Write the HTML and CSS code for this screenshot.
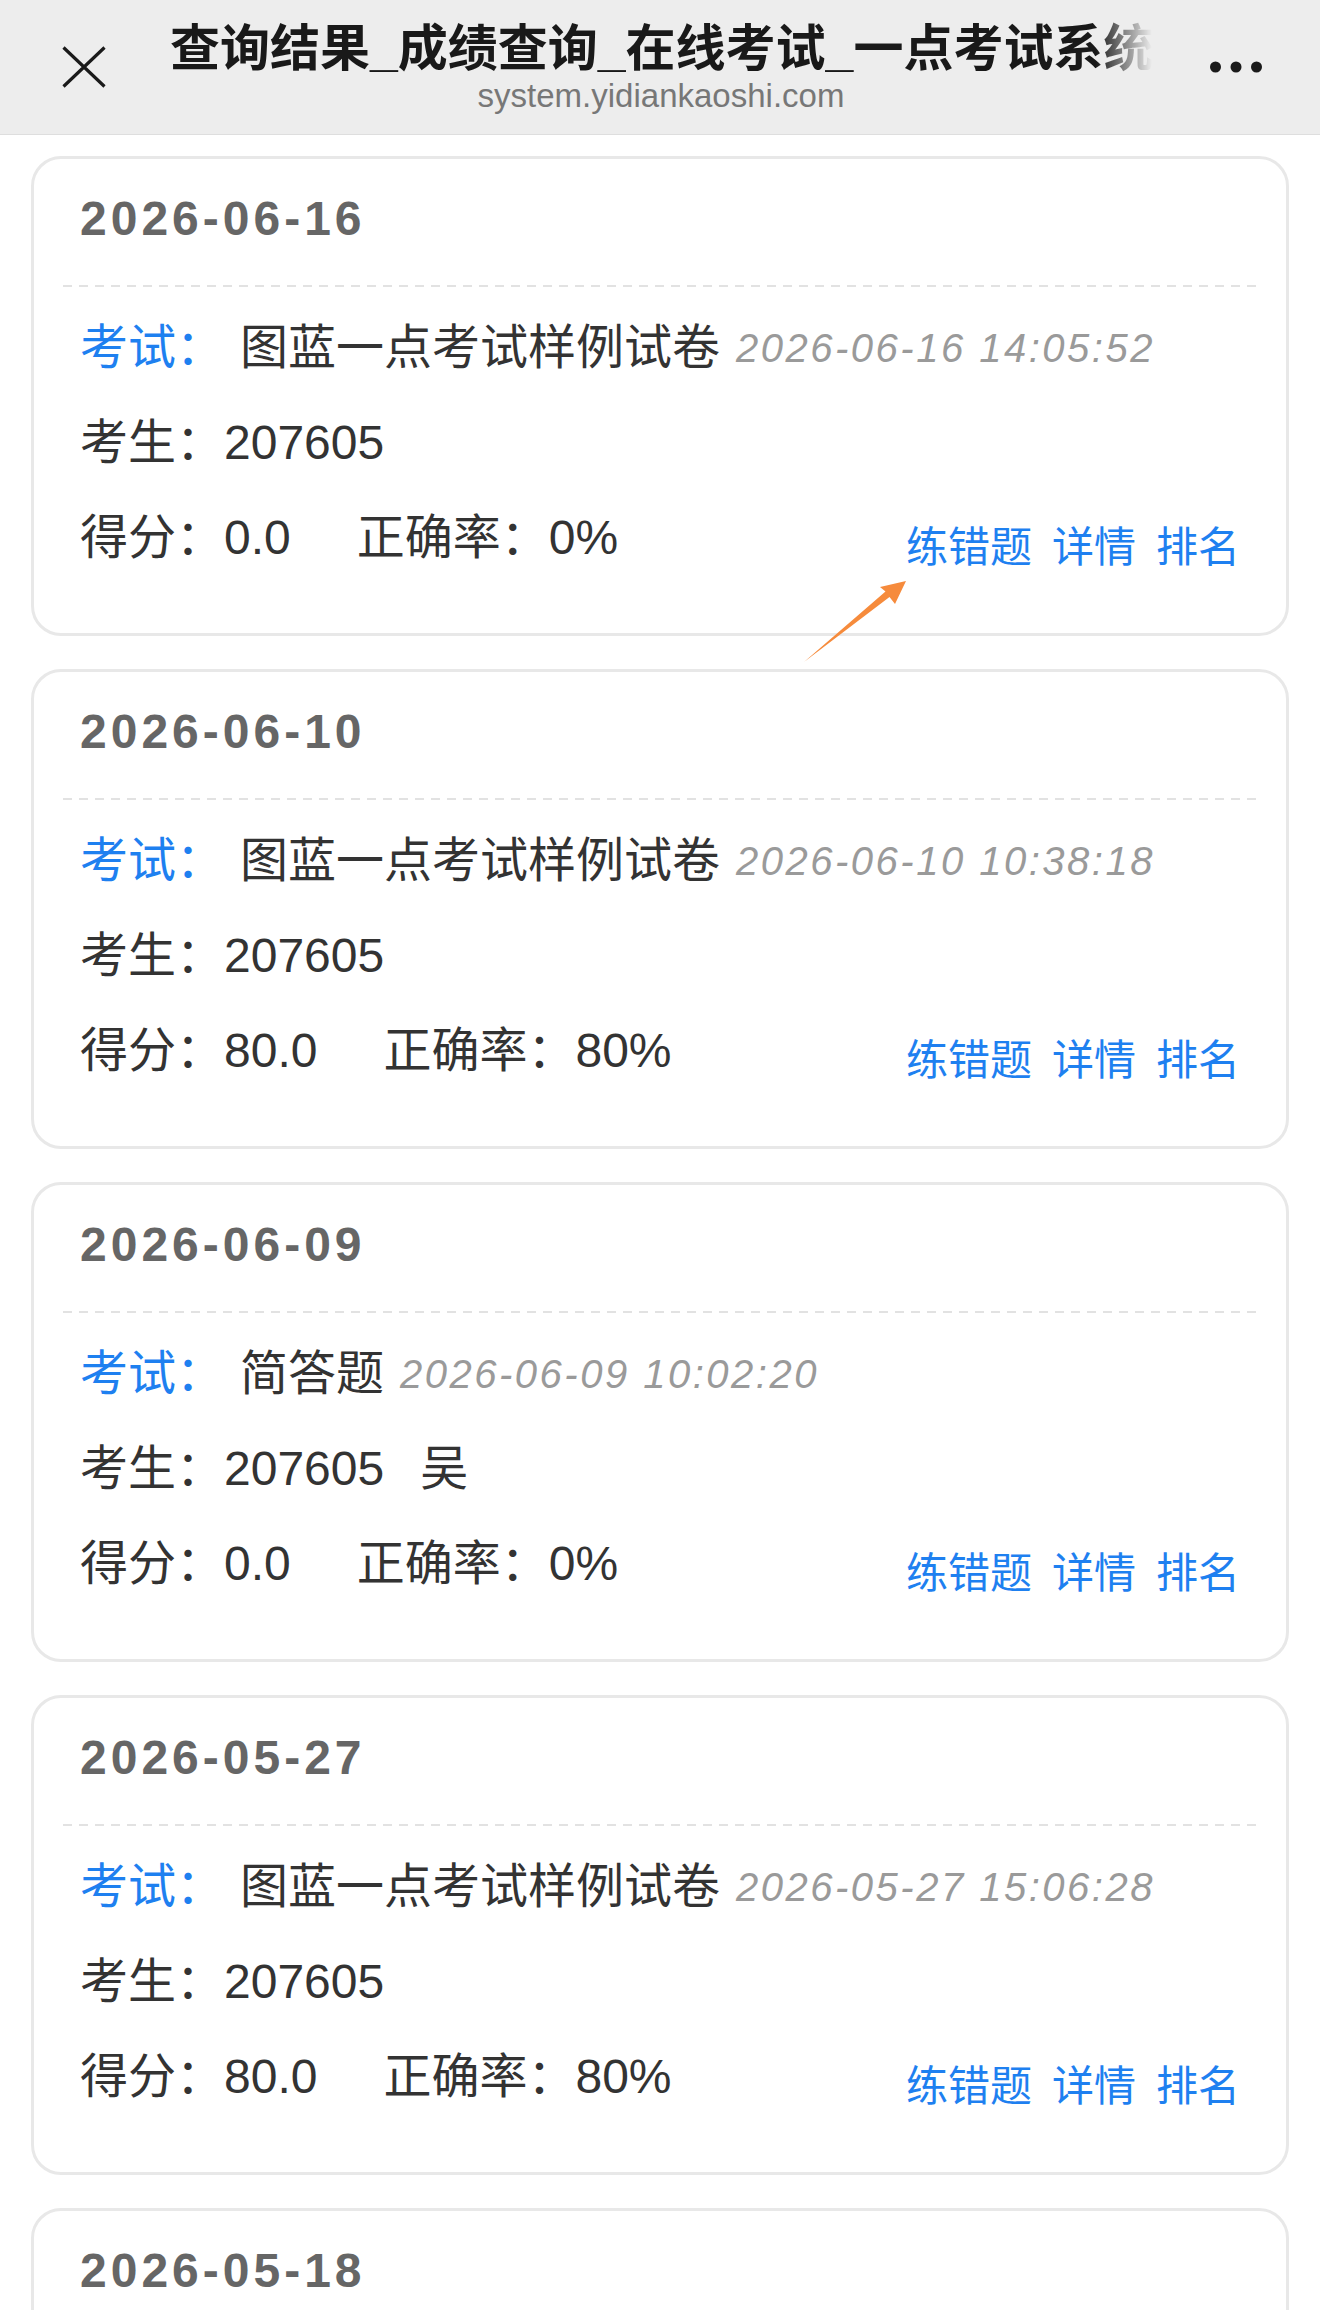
FILE: index.html
```html
<!DOCTYPE html>
<html lang="zh-CN">
<head>
  <meta charset="UTF-8">
  <meta name="viewport" content="width=device-width, initial-scale=1.0">
  <title>查询结果_成绩查询_在线考试_一点考试系统</title>
  <link rel="stylesheet" href="styles.css">
</head>
<body>
  <!-- 顶部标题栏 -->
  <header class="topbar">
    <button class="bar-btn close-btn" aria-label="关闭">
      <svg width="44" height="42" viewBox="0 0 44 42">
        <path d="M1.5 1.5 L42.5 40.5 M42.5 1.5 L1.5 40.5" stroke="#1a1a1a" stroke-width="3.2" fill="none"/>
      </svg>
    </button>
    <div class="bar-title">
      <div class="page-title">查询结果_成绩查询_在线考试_一点考试系统</div>
      <div class="page-host">system.yidiankaoshi.com</div>
    </div>
    <button class="bar-btn more-btn" aria-label="更多">
      <svg width="54" height="12" viewBox="0 0 54 12">
        <circle cx="5.5" cy="6" r="5.5" fill="#1a1a1a"/>
        <circle cx="26" cy="6" r="5.5" fill="#1a1a1a"/>
        <circle cx="46.5" cy="6" r="5.5" fill="#1a1a1a"/>
      </svg>
    </button>
  </header>

  <!-- 成绩列表 -->
  <div class="result-list">
    <div class="result-card">
      <div class="card-date">2026-06-16</div>
      <div class="card-body">
        <div class="row"><span class="label">考试：</span><span class="exam-name">图蓝一点考试样例试卷</span><span class="exam-time">2026-06-16 14:05:52</span></div>
        <div class="row">考生：207605</div>
        <div class="row row-score">
          <div class="score"><span class="score-val">得分：0.0</span><span>正确率：0%</span></div>
          <div class="ops"><a href="#">练错题</a><a href="#">详情</a><a href="#">排名</a></div>
        </div>
      </div>
      <!-- 指向“练错题”的提示箭头 -->
      <svg class="tip-arrow" viewBox="0 0 110 90">
        <polygon points="106,6 80,12 85.5,16.5 4,87 89.5,22 95,29" fill="#f68b3c"/>
      </svg>
    </div>

    <div class="result-card">
      <div class="card-date">2026-06-10</div>
      <div class="card-body">
        <div class="row"><span class="label">考试：</span><span class="exam-name">图蓝一点考试样例试卷</span><span class="exam-time">2026-06-10 10:38:18</span></div>
        <div class="row">考生：207605</div>
        <div class="row row-score">
          <div class="score"><span class="score-val">得分：80.0</span><span>正确率：80%</span></div>
          <div class="ops"><a href="#">练错题</a><a href="#">详情</a><a href="#">排名</a></div>
        </div>
      </div>
    </div>

    <div class="result-card">
      <div class="card-date">2026-06-09</div>
      <div class="card-body">
        <div class="row"><span class="label">考试：</span><span class="exam-name">简答题</span><span class="exam-time">2026-06-09 10:02:20</span></div>
        <div class="row">考生：207605<span class="student-name">吴</span></div>
        <div class="row row-score">
          <div class="score"><span class="score-val">得分：0.0</span><span>正确率：0%</span></div>
          <div class="ops"><a href="#">练错题</a><a href="#">详情</a><a href="#">排名</a></div>
        </div>
      </div>
    </div>

    <div class="result-card">
      <div class="card-date">2026-05-27</div>
      <div class="card-body">
        <div class="row"><span class="label">考试：</span><span class="exam-name">图蓝一点考试样例试卷</span><span class="exam-time">2026-05-27 15:06:28</span></div>
        <div class="row">考生：207605</div>
        <div class="row row-score">
          <div class="score"><span class="score-val">得分：80.0</span><span>正确率：80%</span></div>
          <div class="ops"><a href="#">练错题</a><a href="#">详情</a><a href="#">排名</a></div>
        </div>
      </div>
    </div>

    <div class="result-card">
      <div class="card-date">2026-05-18</div>
    </div>
  </div>
</body>
</html>
```

FILE: styles.css
```css
:root {
  --blue: #1e80f0;
  --text: #333;
  --muted: #9a9a9a;
  --line: #e8e8e8;
}

* {
  box-sizing: border-box;
  margin: 0;
  padding: 0;
}

html,
body {
  overflow: hidden;
}

body {
  background: #fff;
  color: var(--text);
  font-family: "Liberation Sans", "Noto Sans CJK SC", sans-serif;
}

/* 顶部标题栏 */
.topbar {
  display: grid;
  grid-template-columns: 124px 1fr 124px;
  height: 135px;
  background: #ededed;
  border-bottom: 1px solid #dedede;
}

.bar-btn {
  display: flex;
  align-items: center;
  border: none;
  background: none;
}

.close-btn {
  padding-left: 62px;
}

.more-btn {
  padding-left: 14px;
}

.bar-title {
  min-width: 0;
  padding: 20px 44px 0 46px;
}

.page-title {
  font-size: 50px;
  line-height: 58px;
  font-weight: 600;
  color: #191919;
  white-space: nowrap;
  overflow: hidden;
  -webkit-mask-image: linear-gradient(to right, #000 calc(100% - 56px), transparent);
  mask-image: linear-gradient(to right, #000 calc(100% - 56px), transparent);
}

.page-host {
  font-size: 33px;
  line-height: 36px;
  color: #777;
  text-align: center;
}

/* 成绩卡片 */
.result-list {
  padding: 21px 31px 0;
}

.result-card {
  position: relative;
  background: #fff;
  border: 3px solid var(--line);
  border-radius: 30px;
  padding: 0 29px 67px;
  margin-bottom: 33px;
}

.card-date {
  padding: 32px 17px 40px;
  font-size: 48px;
  line-height: 56px;
  font-weight: bold;
  color: #666;
  letter-spacing: 4px;
  background-image: linear-gradient(to right, #e2e2e2 9px, transparent 9px);
  background-size: 16px 2px;
  background-repeat: repeat-x;
  background-position: left bottom;
}

.card-body {
  display: flex;
  flex-direction: column;
  gap: 39px;
  padding: 33px 17px 0;
}

.row {
  display: flex;
  align-items: center;
  height: 56px;
  font-size: 48px;
  line-height: 56px;
  white-space: nowrap;
}

.label {
  color: var(--blue);
}

.exam-name {
  margin-left: 16px;
}

.exam-time {
  margin-left: 16px;
  font-size: 40px;
  font-style: italic;
  color: var(--muted);
  letter-spacing: 2.5px;
}

.student-name {
  margin-left: 36px;
}

.row-score {
  justify-content: space-between;
}

.score-val {
  margin-right: 66px;
}

.ops {
  display: flex;
  gap: 20px;
  margin-top: 20px;
  font-size: 42px;
  line-height: 56px;
}

.ops a {
  color: var(--blue);
  text-decoration: none;
}

.tip-arrow {
  position: absolute;
  left: 766px;
  top: 416px;
  width: 110px;
  height: 90px;
  overflow: visible;
}
```
